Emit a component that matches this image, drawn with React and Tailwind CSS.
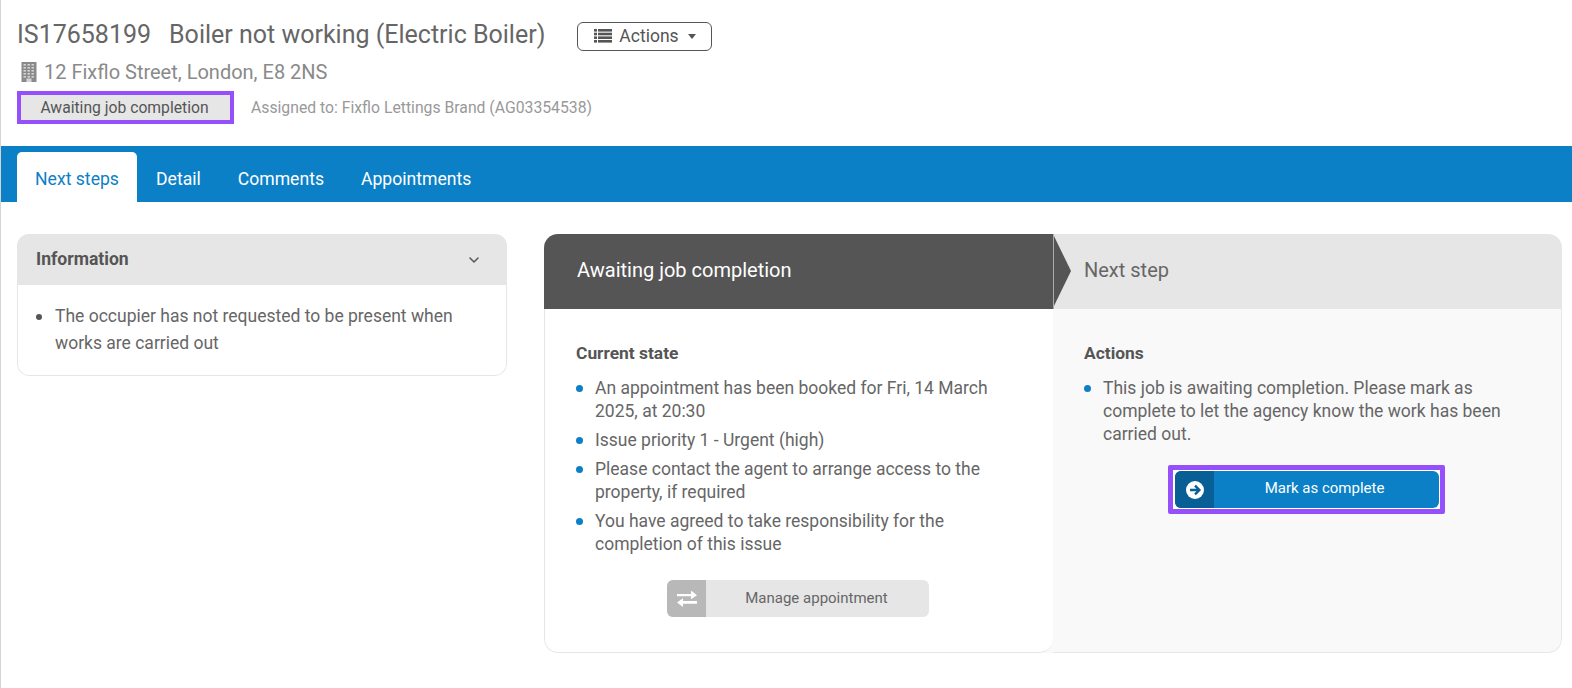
import { ChevronDown } from 'lucide-react'

const BLUE = 'bg-[#0c80c6]'

function Bullets({ items }) {
  return (
    <ul className="flex flex-col gap-[6px] text-[17.5px] leading-[23px] text-[#666]">
      {items.map((text) => (
        <li key={text} className="flex">
          <span className="mt-[8px] mr-[12px] w-[7px] h-[7px] rounded-full bg-[#0c80c6] shrink-0" />
          <span>{text}</span>
        </li>
      ))}
    </ul>
  )
}

function BuildingIcon() {
  return (
    <svg width="16" height="20" viewBox="0 0 15 20" className="shrink-0">
      <rect width="15" height="20" fill="#8a8a8a" />
      {[2, 5, 8, 11, 14].map((y) =>
        [2, 6, 10].map((x) => <rect key={`${x}-${y}`} x={x} y={y} width="2.4" height="1.6" fill="#d5d5d5" />)
      )}
      <rect x="5" y="16.5" width="5" height="3.5" fill="#d5d5d5" />
    </svg>
  )
}

function ListIcon() {
  return (
    <svg width="18" height="14" viewBox="0 0 18 14" fill="#555">
      {[0, 3.7, 7.4, 11].map((y) => (
        <g key={y}>
          <rect x="0" y={y} width="3" height="2.6" />
          <rect x="4" y={y} width="14" height="2.6" />
        </g>
      ))}
    </svg>
  )
}

function SwapIcon() {
  return (
    <svg width="20" height="16" viewBox="0 0 20 16" fill="#fff">
      <path d="M0 3.5h14V0l6 4.7-6 4H14V5.8H0z" transform="translate(0 -0.5)" />
      <path d="M20 10H6V7.2L0 11.6l6 4.4v-3.3h14z" />
    </svg>
  )
}

function ArrowCircle() {
  return (
    <svg width="18" height="18" viewBox="0 0 18 18">
      <circle cx="9" cy="9" r="9" fill="#fff" />
      <path d="M4 9h9M9 4.6 13.4 9 9 13.4" fill="none" stroke="#075f96" strokeWidth="2.4" />
    </svg>
  )
}

export default function App() {
  return (
    <div className="w-[1572px] h-[688px] overflow-hidden bg-white border-l border-l-[#d4d4d4] font-['Roboto',sans-serif] text-[#666]">
      <header className="h-[146px] pl-4 pt-[18px]">
        <div className="flex items-center h-[34px]">
          <h1 className="text-[25px] leading-[34px] whitespace-nowrap">
            <span>IS17658199</span>
            <span className="ml-[18px]">Boiler not working (Electric Boiler)</span>
          </h1>
          <button className="ml-[32px] mt-[2px] flex items-center w-[135px] h-[29px] pl-[16px] rounded-[6px] border border-[#555] text-[17.5px] text-[#555]">
            <ListIcon />
            <span className="ml-[7px]">Actions</span>
            <span className="ml-[9px] border-x-[4.5px] border-x-transparent border-t-[5px] border-t-[#555]" />
          </button>
        </div>
        <div className="flex items-center h-[24px] mt-[8px] pl-[4px] gap-[7px] text-[20px] text-[#8a8a8a]">
          <BuildingIcon />
          <span>12 Fixflo Street, London, E8 2NS</span>
        </div>
        <div className="flex items-center mt-[11px]">
          <span className="ml-[4px] w-[209px] h-[25px] pr-[2px] flex items-center justify-center bg-[#e6e6e6] outline-[4px] outline-[#9650fb] text-[15.7px] text-[#555]">
            Awaiting job completion
          </span>
          <span className="ml-[21px] text-[15.75px] text-[#999]">Assigned to: Fixflo Lettings Brand (AG03354538)</span>
        </div>
      </header>

      <nav className={`${BLUE} h-[56px] pt-[6px] pl-4 flex text-[17.6px] text-white`}>
        <a className="w-[120px] h-[50px] pt-[4px] flex items-center justify-center bg-white text-[#0c80c6] rounded-t-[5px]">Next steps</a>
        <a className="ml-[19px] h-[50px] pt-[4px] flex items-center">Detail</a>
        <a className="ml-[37px] h-[50px] pt-[4px] flex items-center">Comments</a>
        <a className="ml-[37px] h-[50px] pt-[4px] flex items-center">Appointments</a>
      </nav>

      <main className="flex items-start pt-8 pl-4">
        <section className="w-[490px] rounded-[12px] overflow-hidden">
          <div className="h-[51px] bg-[#e6e6e6] flex items-center justify-between pl-[19px] pr-[25px]">
            <h2 className="text-[17.6px] font-bold text-[#555]">Information</h2>
            <ChevronDown size={16} strokeWidth={2.2} className="text-[#555]" />
          </div>
          <ul className="pt-[18px] pb-[18px] pl-[18px] pr-5 text-[17.5px] leading-[27px] text-[#666] border-x border-b border-[#e6e6e6] rounded-b-[12px]">
            <li className="flex">
              <span className="mt-[11px] mr-[13px] w-[6px] h-[6px] rounded-full bg-[#555] shrink-0" />
              <span>The occupier has not requested to be present when works are carried out</span>
            </li>
          </ul>
        </section>

        <section className="ml-[37px] w-[1018px] h-[419px] flex rounded-[14px] bg-[#f9f9f9] overflow-hidden">
          <div className="w-[509px] flex flex-col">
            <div className="h-[75px] pb-[4px] bg-[#555] flex items-center pl-[33px] text-[20px] text-white">Awaiting job completion</div>
            <div className="flex-1 bg-white border-l border-b border-[#e6e6e6] rounded-b-[14px] pl-[31px] pr-[33px] pt-[32px]">
              <h3 className="text-[17.4px] leading-[24px] font-bold text-[#555] mb-[12px]">Current state</h3>
              <Bullets
                items={[
                  'An appointment has been booked for Fri, 14 March 2025, at 20:30',
                  'Issue priority 1 - Urgent (high)',
                  'Please contact the agent to arrange access to the property, if required',
                  'You have agreed to take responsibility for the completion of this issue',
                ]}
              />
              <button className="mt-[24px] mx-auto flex w-[262px] h-[37px] rounded-[6px] overflow-hidden bg-[#e6e6e6] text-[15px] text-[#666]">
                <span className="w-[39px] h-full bg-[#b8b8b8] flex items-center justify-center"><SwapIcon /></span>
                <span className="flex-1 h-full pr-[2px] flex items-center justify-center">Manage appointment</span>
              </button>
            </div>
          </div>
          <div className="relative flex-1 flex flex-col">
            <div className="h-[75px] pb-[4px] bg-[#e6e6e6] flex items-center pl-[31px] text-[20px] text-[#666]">Next step</div>
            <span className="absolute left-0 top-0 border-y-[37.5px] border-y-transparent border-l-[18px] border-l-[#555]" />
            <span className="absolute left-0 top-0 w-px h-[75px] bg-[#aaa]" />
            <div className="flex-1 border-r border-b border-[#e6e6e6] rounded-br-[14px] pl-[31px] pr-[50px] pt-[32px]">
              <h3 className="text-[17.4px] leading-[24px] font-bold text-[#555] mb-[12px]">Actions</h3>
              <Bullets items={['This job is awaiting completion. Please mark as complete to let the agency know the work has been carried out.']} />
              <div className="mt-[19px] ml-[84px] w-[277px] pl-[2px] pr-px py-px bg-white border-[5px] border-[#9650fb] rounded-[2px]">
                <button className={`flex w-full h-[37px] rounded-[6px] overflow-hidden ${BLUE} text-[15px] text-white`}>
                  <span className="w-[39px] h-full bg-[#075f96] flex items-center justify-center"><ArrowCircle /></span>
                  <span className="flex-1 h-full pb-[2px] pr-[4px] flex items-center justify-center">Mark as complete</span>
                </button>
              </div>
            </div>
          </div>
        </section>
      </main>
    </div>
  )
}
